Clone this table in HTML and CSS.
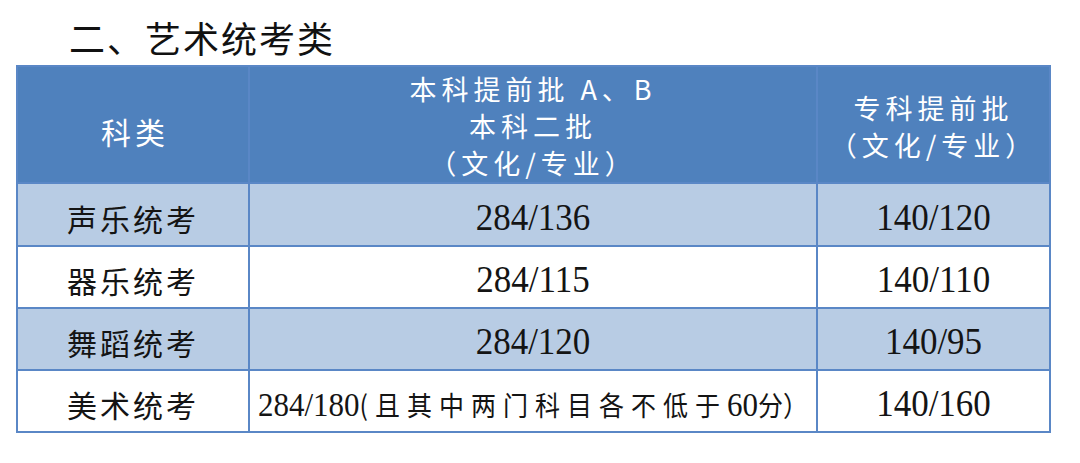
FILE: index.html
```html
<!DOCTYPE html>
<html lang="zh-CN">
<head>
<meta charset="utf-8">
<title>二、艺术统考类</title>
<link rel="stylesheet" href="styles.css">
</head>
<body>
<div class="page">
  <h2 class="title">二、艺术统考类</h2>
  <table class="scores">
    <colgroup>
      <col class="c1">
      <col class="c2">
      <col class="c3">
    </colgroup>
    <thead>
      <tr>
        <th><span class="kl">科类</span></th>
        <th><span class="hl">本科提前批 A、B</span><span class="hl">本科二批</span><span class="hl">（文化/专业）</span></th>
        <th><span class="hl">专科提前批</span><span class="hl">（文化/专业）</span></th>
      </tr>
    </thead>
    <tbody>
      <tr class="alt first">
        <td class="name">声乐统考</td>
        <td class="num"><span class="tall">284/136</span></td>
        <td class="num"><span class="tall">140/120</span></td>
      </tr>
      <tr>
        <td class="name">器乐统考</td>
        <td class="num"><span class="tall">284/115</span></td>
        <td class="num"><span class="tall">140/110</span></td>
      </tr>
      <tr class="alt">
        <td class="name">舞蹈统考</td>
        <td class="num"><span class="tall">284/120</span></td>
        <td class="num"><span class="tall">140/95</span></td>
      </tr>
      <tr>
        <td class="name">美术统考</td>
        <td class="num mixed"><span class="tall"><span class="n2">284/180</span><span class="cj po">(</span><span class="cj sp">且其中两门科目各不低于</span><span class="n2">60</span><span class="cj pe">分）</span></span></td>
        <td class="num"><span class="tall">140/160</span></td>
      </tr>
    </tbody>
  </table>
</div>
</body>
</html>
```

FILE: styles.css
```css
html, body {
  margin: 0;
  padding: 0;
  background: #ffffff;
}

.page {
  width: 1080px;
  height: 463px;
  overflow: hidden;
}

.title {
  margin: 0;
  height: 65px;
  box-sizing: border-box;
  padding: 15px 0 0 69px;
  font-family: "Noto Sans CJK SC", sans-serif;
  font-weight: 400;
  font-size: 36px;
  line-height: 44px;
  letter-spacing: 2px;
  color: #111111;
}

.scores {
  margin-left: 16px;
  width: 1035px;
  table-layout: fixed;
  border-collapse: separate;
  border-spacing: 0;
  border-top: 2px solid #5a87c6;
  border-left: 2px solid #5a87c6;
}

.c1 { width: 232px; }
.c2 { width: 568px; }
.c3 { width: 233px; }

.scores th,
.scores td {
  box-sizing: border-box;
  padding: 0;
  border-right: 2px solid #5a87c6;
  border-bottom: 2px solid #5a87c6;
  text-align: center;
  vertical-align: middle;
}

.scores th {
  height: 117px;
  background: #4f81bd;
  color: #ffffff;
  font-family: "Noto Sans CJK SC", sans-serif;
  font-weight: 400;
  font-size: 27px;
  letter-spacing: 5px;
  line-height: 37px;
  padding-top: 2px;
}

.hl {
  display: block;
}

.kl {
  display: block;
  padding-top: 12px;
  padding-left: 4px;
  font-size: 30px;
  letter-spacing: 4px;
}

.scores td {
  height: 62px;
  background: #ffffff;
  color: #141414;
  padding-top: 6px;
}

.scores tr.first td {
  height: 63px;
}

.scores tr.alt td {
  background: #b8cce4;
}

.name {
  font-family: "Noto Sans CJK SC", sans-serif;
  font-size: 30px;
  letter-spacing: 3px;
  padding-left: 3px;
}

.num {
  font-family: "Liberation Serif", "Times New Roman", serif;
  font-size: 35px;
  line-height: 40px;
}

.tall {
  display: inline-block;
  transform: scaleY(1.1);
}

.mixed {
  white-space: nowrap;
}

.n2 {
  font-family: "Liberation Serif", "Times New Roman", serif;
  font-size: 31px;
}

.cj {
  font-family: "Noto Sans CJK SC", sans-serif;
  font-size: 25px;
}

.po {
  letter-spacing: 7px;
}

.sp {
  letter-spacing: 7px;
}

.pe {
  letter-spacing: 0;
}
```
